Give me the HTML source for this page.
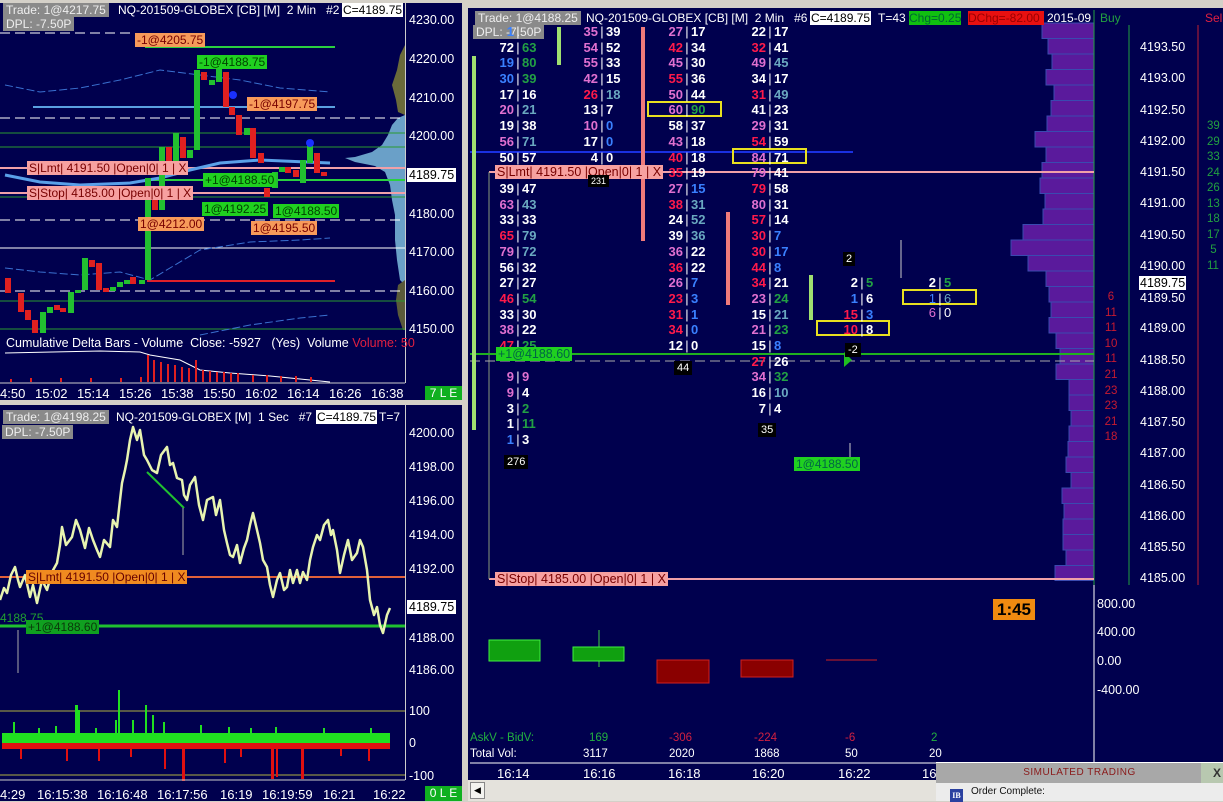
<!DOCTYPE html>
<html><head><meta charset="utf-8"><style>
*{margin:0;padding:0;box-sizing:border-box}
body{width:1223px;height:801px;overflow:hidden;background:#d4d0c8;font-family:"Liberation Sans",sans-serif;position:relative}
.p{position:absolute;background:#00004e;overflow:hidden}
.t{position:absolute;white-space:nowrap;font-size:12px;color:#fff;line-height:14px}
.ax{position:absolute;font-size:12.5px;color:#fff;white-space:nowrap}
.lbl{position:absolute;font-size:12px;line-height:14px;padding:0 2px;white-space:nowrap}
.c{position:absolute;display:flex;font:bold 13px "Liberation Sans",sans-serif;line-height:15px;white-space:nowrap}
.c .a{width:36px;text-align:right}.c .s{width:8px;text-align:center;color:#fff;font-weight:normal}.c .b{width:34px}
.W{color:#fff}.P{color:#e070d0}.R{color:#ff1a4a}.B{color:#3a80ff}.T{color:#6aa8c0}.G{color:#22a044}
.bk{position:absolute;background:#000;color:#fff;font-size:11px;padding:1px 3px}
svg{position:absolute;left:0;top:0}
.tm{position:absolute;font-size:13px;color:#fff;white-space:nowrap}
</style></head><body>

<!-- TOP LEFT PANEL -->
<div class="p" style="left:0;top:3px;width:462px;height:397px">
<svg width="462" height="397" viewBox="0 3 462 397">
<rect x="405" y="3" width="1" height="380" fill="#ccc"/>
<!-- volume profile -->
<polygon points="405,45 400,55 397,70 392,85 396,100 398,112 405,115" fill="#6a6a3a"/>
<polygon points="405,115 398,118 392,125 388,135 382,145 372,152 355,157 345,158 355,162 375,166 385,172 390,185 392,200 395,215 395,240 397,260 400,280 405,285" fill="#6aa0c8"/>
<polygon points="405,280 398,285 396,300 398,315 403,330 405,330" fill="#5a5a3a"/>
<!-- lines -->
<g stroke-width="1">
<line x1="0" y1="33" x2="135" y2="33" stroke="#fff" stroke-dasharray="10,5"/>
<line x1="0" y1="118" x2="405" y2="118" stroke="#fff" stroke-dasharray="10,5"/>
<line x1="0" y1="220" x2="405" y2="220" stroke="#fff" stroke-dasharray="10,5"/>
<line x1="0" y1="291" x2="405" y2="291" stroke="#fff" stroke-dasharray="10,5"/>
<line x1="0" y1="248" x2="405" y2="248" stroke="#fff"/>
<line x1="145" y1="47" x2="335" y2="47" stroke="#2ad040" stroke-width="2"/>
<line x1="0" y1="133" x2="405" y2="133" stroke="#2a9a30"/>
<line x1="0" y1="147" x2="405" y2="147" stroke="#2a9a30"/>
<line x1="0" y1="197" x2="405" y2="197" stroke="#2a9a30"/>
<line x1="0" y1="301" x2="405" y2="301" stroke="#2a9a30"/>
<line x1="0" y1="329" x2="405" y2="329" stroke="#2a9a30"/>
<line x1="33" y1="107" x2="335" y2="107" stroke="#5aa0e0" stroke-width="2"/>
<line x1="147" y1="281" x2="335" y2="281" stroke="#e0202a" stroke-width="2"/>
<line x1="0" y1="168" x2="405" y2="168" stroke="#f0a0a8" stroke-width="2"/>
<line x1="0" y1="193" x2="405" y2="193" stroke="#f0a0a8" stroke-width="2"/>
<line x1="150" y1="180" x2="405" y2="180" stroke="#2ad040" stroke-width="2"/>
<polyline points="5,175 20,178 40,182 80,185 130,183 160,178 190,170 220,163 260,160 330,163" fill="none" stroke="#5aa0e8" stroke-width="3"/>
<polyline points="5,85 40,92 80,88 120,80 160,70 200,75 240,80 280,88 330,92" fill="none" stroke="#3a70d0" stroke-dasharray="8,3"/>
<polyline points="5,268 40,272 80,275 120,272 150,280 200,250 250,242 300,240 330,238" fill="none" stroke="#3a70d0" stroke-dasharray="8,3"/>
<polyline points="200,335 250,325 300,318 330,315" fill="none" stroke="#3a70d0" stroke-dasharray="8,3"/>
</g>
<!-- candles -->
<g>
<rect x="5" y="278" width="6" height="15" fill="#e02020"/><rect x="18" y="293" width="6" height="19" fill="#e02020"/>
<rect x="25" y="310" width="6" height="10" fill="#e02020"/><rect x="32" y="320" width="6" height="13" fill="#e02020"/>
<rect x="40" y="312" width="6" height="21" fill="#22c030"/><rect x="47" y="307" width="6" height="6" fill="#22c030"/>
<rect x="54" y="305" width="6" height="5" fill="#e02020"/><rect x="60" y="308" width="6" height="4" fill="#e02020"/>
<rect x="68" y="292" width="6" height="21" fill="#22c030"/><rect x="75" y="290" width="6" height="3" fill="#22c030"/>
<rect x="82" y="258" width="6" height="32" fill="#22c030"/><rect x="89" y="260" width="6" height="7" fill="#e02020"/>
<rect x="96" y="263" width="6" height="27" fill="#e02020"/><rect x="103" y="288" width="6" height="4" fill="#e02020"/>
<rect x="110" y="287" width="6" height="4" fill="#22c030"/><rect x="117" y="282" width="6" height="5" fill="#22c030"/>
<rect x="124" y="280" width="6" height="4" fill="#22c030"/><rect x="130" y="277" width="6" height="7" fill="#e02020"/>
<rect x="139" y="280" width="6" height="4" fill="#22c030"/><rect x="145" y="178" width="6" height="102" fill="#22c030"/>
<rect x="152" y="193" width="6" height="17" fill="#e02020"/><rect x="159" y="147" width="6" height="63" fill="#22c030"/>
<rect x="166" y="147" width="6" height="26" fill="#e02020"/><rect x="173" y="133" width="6" height="40" fill="#22c030"/>
<rect x="180" y="137" width="6" height="21" fill="#e02020"/><rect x="187" y="150" width="6" height="8" fill="#22c030"/>
<rect x="194" y="70" width="6" height="80" fill="#22c030"/><rect x="201" y="72" width="6" height="8" fill="#e02020"/>
<rect x="209" y="80" width="6" height="5" fill="#22c030"/><rect x="216" y="63" width="6" height="19" fill="#22c030"/>
<rect x="223" y="72" width="6" height="35" fill="#e02020"/><rect x="229" y="107" width="6" height="8" fill="#e02020"/>
<rect x="236" y="115" width="6" height="20" fill="#e02020"/><rect x="244" y="128" width="6" height="7" fill="#22c030"/>
<rect x="250" y="128" width="6" height="30" fill="#e02020"/><rect x="258" y="153" width="6" height="10" fill="#e02020"/>
<rect x="264" y="188" width="6" height="9" fill="#e02020"/><rect x="272" y="172" width="6" height="16" fill="#22c030"/>
<rect x="279" y="167" width="6" height="5" fill="#22c030"/><rect x="285" y="167" width="6" height="6" fill="#e02020"/>
<rect x="293" y="170" width="6" height="7" fill="#e02020"/><rect x="300" y="160" width="6" height="23" fill="#22c030"/>
<rect x="307" y="143" width="6" height="20" fill="#22c030"/><rect x="314" y="153" width="6" height="20" fill="#e02020"/>
<rect x="321" y="172" width="6" height="4" fill="#e02020"/>
<circle cx="233" cy="95" r="4" fill="#1a30ff"/><circle cx="310" cy="143" r="4" fill="#1a30ff"/>
</g>
<!-- cum delta -->
<polyline points="5,353 100,351 140,352 150,355 180,360 200,370 230,373 270,376 310,380 330,382" fill="none" stroke="#fff"/>
<g fill="#e02020">
<rect x="147" y="355" width="2" height="27"/><rect x="153" y="360" width="2" height="22"/><rect x="160" y="362" width="2" height="20"/><rect x="167" y="364" width="2" height="18"/><rect x="174" y="365" width="2" height="17"/><rect x="181" y="367" width="2" height="15"/><rect x="188" y="368" width="2" height="14"/><rect x="195" y="360" width="2" height="22"/><rect x="202" y="370" width="2" height="12"/><rect x="209" y="371" width="2" height="11"/><rect x="216" y="372" width="2" height="10"/><rect x="223" y="372" width="2" height="10"/><rect x="230" y="373" width="2" height="9"/><rect x="237" y="373" width="2" height="9"/><rect x="252" y="375" width="2" height="7"/><rect x="266" y="375" width="2" height="7"/><rect x="280" y="376" width="2" height="6"/><rect x="295" y="376" width="2" height="6"/><rect x="310" y="377" width="2" height="5"/><rect x="10" y="379" width="2" height="3"/><rect x="30" y="378" width="2" height="4"/><rect x="60" y="378" width="2" height="4"/><rect x="90" y="378" width="2" height="4"/><rect x="120" y="378" width="2" height="4"/><rect x="140" y="377" width="2" height="5"/>
</g>
<rect x="0" y="383" width="462" height="17" fill="#00004e"/>
<line x1="0" y1="383" x2="405" y2="383" stroke="#ccc"/>
</svg>
<div class="t" style="left:3px;top:0;background:#8a8a8a;color:#eee;padding:0 3px">Trade: 1@4217.75</div>
<div class="t" style="left:118px;top:0">NQ-201509-GLOBEX [CB] [M] &nbsp;2 Min &nbsp;&nbsp;#2</div>
<div class="t" style="left:342px;top:0;background:#fff;color:#000;padding:0 1px">C=4189.75</div>
<div class="t" style="left:3px;top:14px;background:#8a8a8a;color:#eee;padding:0 3px">DPL: -7.50P</div>
<div class="lbl" style="left:135px;top:30px;background:#f79a5a;color:#700">-1@4205.75</div>
<div class="lbl" style="left:197px;top:52px;background:#20d020;color:#040">-1@4188.75</div>
<div class="lbl" style="left:247px;top:94px;background:#f79a5a;color:#700">-1@4197.75</div>
<div class="lbl" style="left:27px;top:158px;background:#f7a0a0;color:#700">S|Lmt| 4191.50 |Open|0| 1 | X</div>
<div class="lbl" style="left:203px;top:170px;background:#20d020;color:#040">+1@4188.50</div>
<div class="lbl" style="left:27px;top:183px;background:#f7a0a0;color:#700">S|Stop| 4185.00 |Open|0| 1 | X</div>
<div class="lbl" style="left:202px;top:199px;background:#20d020;color:#040">1@4192.25</div>
<div class="lbl" style="left:273px;top:201px;background:#20d020;color:#040">1@4188.50</div>
<div class="lbl" style="left:138px;top:214px;background:#f79a5a;color:#700">1@4212.00</div>
<div class="lbl" style="left:251px;top:218px;background:#f79a5a;color:#700">1@4195.50</div>
<div class="ax" style="left:409px;top:10px">4230.00</div>
<div class="ax" style="left:409px;top:49px">4220.00</div>
<div class="ax" style="left:409px;top:88px">4210.00</div>
<div class="ax" style="left:409px;top:126px">4200.00</div>
<div class="ax" style="left:407px;top:165px;background:#fff;color:#000;padding:0 2px">4189.75</div>
<div class="ax" style="left:409px;top:204px">4180.00</div>
<div class="ax" style="left:409px;top:242px">4170.00</div>
<div class="ax" style="left:409px;top:281px">4160.00</div>
<div class="ax" style="left:409px;top:319px">4150.00</div>
<div class="t" style="left:6px;top:333px;font-size:12.5px">Cumulative Delta Bars - Volume &nbsp;Close: -5927 &nbsp;&nbsp;(Yes) &nbsp;Volume <span style="color:#e02040">Volume: 50</span></div>
<div class="tm" style="left:0;top:383px">4:50</div>
<div class="tm" style="left:35px;top:383px">15:02</div>
<div class="tm" style="left:77px;top:383px">15:14</div>
<div class="tm" style="left:119px;top:383px">15:26</div>
<div class="tm" style="left:161px;top:383px">15:38</div>
<div class="tm" style="left:203px;top:383px">15:50</div>
<div class="tm" style="left:245px;top:383px">16:02</div>
<div class="tm" style="left:287px;top:383px">16:14</div>
<div class="tm" style="left:329px;top:383px">16:26</div>
<div class="tm" style="left:371px;top:383px">16:38</div>
<div class="t" style="left:425px;top:383px;width:37px;height:14px;background:#10b020;text-align:center">7 L E</div>
</div>

<!-- BOTTOM LEFT PANEL -->
<div class="p" style="left:0;top:405px;width:462px;height:396px">
<svg width="462" height="396" viewBox="0 405 462 396">
<rect x="405" y="405" width="1" height="375" fill="#ccc"/>
<line x1="0" y1="577" x2="405" y2="577" stroke="#e0603a" stroke-width="2"/>
<line x1="0" y1="626" x2="405" y2="626" stroke="#20c030" stroke-width="3"/>
<line x1="0" y1="711" x2="405" y2="711" stroke="#b0b040"/>
<line x1="0" y1="775" x2="405" y2="775" stroke="#b0b040"/>
<polyline points="0,600 4,588 7,593 11,575 15,567 18,580 20,587 25,575 30,597 33,585 37,603 42,580 47,590 52,572 57,563 60,545 62,527 66,545 72,537 76,520 80,530 85,548 89,528 93,540 97,550 100,557 104,540 110,547 113,520 117,527 120,500 122,483 125,470 127,460 130,440 133,427 137,440 140,430 144,455 147,460 152,470 157,473 161,455 167,447 170,465 173,463 177,478 182,480 184,495 187,500 190,485 195,477 199,505 203,520 207,500 213,497 216,515 220,500 224,530 227,543 230,555 233,557 237,545 240,563 244,548 247,540 250,525 253,513 257,530 260,543 263,560 267,567 270,585 273,597 277,580 280,573 284,590 287,587 290,570 293,583 297,570 300,583 303,572 307,580 310,560 313,547 317,535 320,540 324,525 328,520 331,535 333,530 337,550 340,573 344,555 348,540 352,560 357,553 360,540 363,547 367,570 370,600 374,615 377,607 380,625 383,633 387,615 390,608" fill="none" stroke="#e8f4b0" stroke-width="2.5" stroke-linejoin="round"/>
<line x1="147" y1="472" x2="184" y2="508" stroke="#20c030" stroke-width="2"/>
<line x1="18" y1="630" x2="18" y2="673" stroke="#aaa"/><line x1="183" y1="508" x2="183" y2="555" stroke="#aaa"/>
<rect x="2" y="733" width="388" height="10" fill="#20e020"/>
<rect x="2" y="743" width="388" height="6" fill="#e01010"/>
<g fill="#20e020">
<rect x="13" y="722" width="2" height="12"/><rect x="38" y="728" width="2" height="6"/><rect x="75" y="705" width="3" height="28"/><rect x="78" y="710" width="2" height="24"/><rect x="118" y="690" width="2" height="44"/><rect x="115" y="720" width="2" height="14"/><rect x="145" y="705" width="2" height="29"/><rect x="152" y="715" width="2" height="19"/><rect x="163" y="722" width="2" height="12"/><rect x="132" y="720" width="2" height="14"/><rect x="200" y="725" width="2" height="9"/><rect x="228" y="727" width="2" height="7"/><rect x="250" y="728" width="2" height="6"/><rect x="275" y="727" width="2" height="7"/><rect x="323" y="728" width="2" height="6"/><rect x="370" y="728" width="2" height="6"/><rect x="55" y="726" width="2" height="8"/><rect x="95" y="728" width="2" height="6"/></g>
<g fill="#e01010">
<rect x="20" y="749" width="2" height="10"/><rect x="66" y="749" width="2" height="12"/><rect x="98" y="749" width="2" height="12"/><rect x="164" y="749" width="2" height="20"/><rect x="182" y="749" width="3" height="32"/><rect x="224" y="749" width="2" height="14"/><rect x="271" y="749" width="3" height="30"/><rect x="276" y="749" width="2" height="28"/><rect x="301" y="749" width="3" height="30"/><rect x="368" y="749" width="2" height="12"/><rect x="130" y="749" width="2" height="8"/><rect x="240" y="749" width="2" height="8"/><rect x="340" y="749" width="2" height="7"/></g>
<line x1="0" y1="780" x2="405" y2="780" stroke="#ccc"/>
</svg>
<div class="t" style="left:3px;top:5px;background:#8a8a8a;color:#eee;padding:0 3px">Trade: 1@4198.25</div>
<div class="t" style="left:116px;top:5px">NQ-201509-GLOBEX [M] &nbsp;1 Sec &nbsp;&nbsp;#7</div>
<div class="t" style="left:316px;top:5px;background:#fff;color:#000;padding:0 1px">C=4189.75</div>
<div class="t" style="left:379px;top:5px">T=7</div>
<div class="t" style="left:2px;top:20px;background:#8a8a8a;color:#eee;padding:0 3px">DPL: -7.50P</div>
<div class="lbl" style="left:26px;top:165px;background:#f08a20;color:#600">S|Lmt| 4191.50 |Open|0| 1 | X</div>
<div class="t" style="left:0;top:206px;color:#20a030">4188.75</div>
<div class="lbl" style="left:26px;top:215px;background:#10a020;color:#0a3a0a">+1@4188.60</div>
<div class="ax" style="left:409px;top:21px">4200.00</div>
<div class="ax" style="left:409px;top:55px">4198.00</div>
<div class="ax" style="left:409px;top:89px">4196.00</div>
<div class="ax" style="left:409px;top:123px">4194.00</div>
<div class="ax" style="left:409px;top:157px">4192.00</div>
<div class="ax" style="left:407px;top:195px;background:#fff;color:#000;padding:0 2px">4189.75</div>
<div class="ax" style="left:409px;top:226px">4188.00</div>
<div class="ax" style="left:409px;top:258px">4186.00</div>
<div class="ax" style="left:409px;top:299px">100</div>
<div class="ax" style="left:409px;top:331px">0</div>
<div class="ax" style="left:409px;top:364px">-100</div>
<div class="tm" style="left:0;top:382px">4:29</div>
<div class="tm" style="left:37px;top:382px">16:15:38</div>
<div class="tm" style="left:97px;top:382px">16:16:48</div>
<div class="tm" style="left:157px;top:382px">16:17:56</div>
<div class="tm" style="left:220px;top:382px">16:19</div>
<div class="tm" style="left:262px;top:382px">16:19:59</div>
<div class="tm" style="left:323px;top:382px">16:21</div>
<div class="tm" style="left:373px;top:382px">16:22</div>
<div class="t" style="left:425px;top:381px;width:37px;height:15px;background:#10b020;text-align:center">0 L E</div>
</div>

<!-- RIGHT PANEL -->
<div class="p" style="left:468px;top:8px;width:755px;height:772px">
<svg width="755" height="772" viewBox="468 8 755 772">
<g fill="#5a1a9c" stroke="#3a4ab0">
<rect x="1042" y="23" width="52" height="15.5"/><rect x="1048" y="38.5" width="46" height="15.5"/><rect x="1052" y="54" width="42" height="15.5"/><rect x="1046" y="69.5" width="48" height="15.5"/><rect x="1054" y="85" width="40" height="15.5"/><rect x="1051" y="100.5" width="43" height="15.5"/><rect x="1047" y="116" width="47" height="15.5"/><rect x="1035" y="131.5" width="59" height="15.5"/><rect x="1046" y="147" width="48" height="15.5"/><rect x="1042" y="162.5" width="52" height="15.5"/><rect x="1040" y="178" width="54" height="15.5"/><rect x="1045" y="193.5" width="49" height="15.5"/><rect x="1043" y="209" width="51" height="15.5"/><rect x="1023" y="224.5" width="71" height="15.5"/><rect x="1011" y="240" width="83" height="15.5"/><rect x="1028" y="255.5" width="66" height="15.5"/><rect x="1046" y="271" width="48" height="15.5"/><rect x="1049" y="286.5" width="45" height="15.5"/><rect x="1051" y="302" width="43" height="15.5"/><rect x="1049" y="317.5" width="45" height="15.5"/><rect x="1056" y="333" width="38" height="15.5"/><rect x="1060" y="348.5" width="34" height="15.5"/><rect x="1056" y="364" width="38" height="15.5"/><rect x="1069" y="379.5" width="25" height="15.5"/><rect x="1069" y="395" width="25" height="15.5"/><rect x="1071" y="410.5" width="23" height="15.5"/><rect x="1069" y="426" width="25" height="15.5"/><rect x="1068" y="441.5" width="26" height="15.5"/><rect x="1066" y="457" width="28" height="15.5"/><rect x="1071" y="472.5" width="23" height="15.5"/><rect x="1062" y="488" width="32" height="15.5"/><rect x="1064" y="503.5" width="30" height="15.5"/><rect x="1063" y="519" width="31" height="15.5"/><rect x="1063" y="534.5" width="31" height="15.5"/><rect x="1066" y="550" width="28" height="15.5"/><rect x="1055" y="565.5" width="39" height="15"/>
</g>
<line x1="1094" y1="10" x2="1094" y2="585" stroke="#22a040"/>
<line x1="1129" y1="25" x2="1129" y2="585" stroke="#22a040"/>
<line x1="1198" y1="25" x2="1198" y2="585" stroke="#c02030"/>
<line x1="489" y1="172" x2="1094" y2="172" stroke="#f0a0a8" stroke-width="2"/>
<line x1="489" y1="579" x2="1094" y2="579" stroke="#f0a0a8" stroke-width="2"/>
<line x1="489" y1="172" x2="489" y2="579" stroke="#8a9a7a"/>
<line x1="470" y1="354" x2="1094" y2="354" stroke="#20b020" stroke-width="2"/>
<line x1="470" y1="361" x2="1094" y2="361" stroke="#aaa" stroke-dasharray="10,5"/>
<line x1="470" y1="152" x2="853" y2="152" stroke="#1a30e0" stroke-width="2"/>
<rect x="472" y="56" width="4" height="374" fill="#a0e070"/>
<rect x="557" y="27" width="4" height="38" fill="#a0e070"/>
<rect x="809" y="275" width="4" height="45" fill="#a0e070"/>
<rect x="641" y="27" width="4" height="214" fill="#f07a7a"/>
<rect x="726" y="212" width="4" height="93" fill="#f07a7a"/>
<rect x="648" y="102" width="73" height="14" fill="none" stroke="#e8e020" stroke-width="2"/>
<rect x="733" y="149" width="73" height="14" fill="none" stroke="#e8e020" stroke-width="2"/>
<rect x="817" y="321" width="72" height="14" fill="none" stroke="#e8e020" stroke-width="2"/>
<rect x="903" y="290" width="73" height="14" fill="none" stroke="#e8e020" stroke-width="2"/>
<line x1="901" y1="240" x2="901" y2="278" stroke="#ccc"/>
<line x1="850" y1="443" x2="850" y2="458" stroke="#ccc"/>
<polygon points="844,352 852,360 844,367" fill="#20c020"/>
<line x1="1094" y1="585" x2="1094" y2="763" stroke="#fff"/>
<line x1="470" y1="763" x2="1094" y2="763" stroke="#fff"/>
<rect x="489" y="640" width="51" height="21" fill="#10a010" stroke="#40f040"/>
<line x1="599" y1="630" x2="599" y2="667" stroke="#40d040"/>
<rect x="573" y="647" width="51" height="14" fill="#10a010" stroke="#40f040"/>
<rect x="657" y="660" width="52" height="23" fill="#8a0000" stroke="#d02020"/>
<rect x="741" y="660" width="52" height="17" fill="#8a0000" stroke="#d02020"/>
<line x1="826" y1="660" x2="877" y2="660" stroke="#d02020"/>
</svg>
<div class="t" style="left:7px;top:3px;background:#8a8a8a;color:#eee;padding:0 3px">Trade: 1@4188.25</div>
<div class="t" style="left:118px;top:3px">NQ-201509-GLOBEX [CB] [M] &nbsp;2 Min &nbsp;&nbsp;#6</div>
<div class="t" style="left:342px;top:3px;background:#fff;color:#000;padding:0 1px">C=4189.75</div>
<div class="t" style="left:410px;top:3px">T=43</div>
<div class="t" style="left:441px;top:3px;background:#10c010;color:#063">Chg=0.25</div>
<div class="t" style="left:500px;top:3px;background:#e81010;color:#900;width:76px">DChg=-82.00</div>
<div class="t" style="left:579px;top:3px">2015-09</div>
<div class="t" style="left:632px;top:3px;color:#22a040">Buy</div>
<div class="t" style="left:737px;top:3px;color:#e02040">Sell</div>
<div class="t" style="left:5px;top:17px;background:#8a8a8a;color:#eee;padding:0 3px">DPL: -7.50P</div>
</div>

<div style="position:absolute;left:0;top:0">
<div class="c" style="left:478px;top:24px"><span class="a B">1</span><span class="s">|</span><span class="b"></span></div>
<div class="c" style="left:478px;top:40px"><span class="a W">72</span><span class="s">|</span><span class="b G">63</span></div>
<div class="c" style="left:478px;top:55px"><span class="a B">19</span><span class="s">|</span><span class="b G">80</span></div>
<div class="c" style="left:478px;top:71px"><span class="a B">30</span><span class="s">|</span><span class="b G">39</span></div>
<div class="c" style="left:478px;top:87px"><span class="a W">17</span><span class="s">|</span><span class="b W">16</span></div>
<div class="c" style="left:478px;top:102px"><span class="a P">20</span><span class="s">|</span><span class="b T">21</span></div>
<div class="c" style="left:478px;top:118px"><span class="a W">19</span><span class="s">|</span><span class="b W">38</span></div>
<div class="c" style="left:478px;top:134px"><span class="a P">56</span><span class="s">|</span><span class="b T">71</span></div>
<div class="c" style="left:478px;top:150px"><span class="a W">50</span><span class="s">|</span><span class="b W">57</span></div>
<div class="c" style="left:478px;top:181px"><span class="a W">39</span><span class="s">|</span><span class="b W">47</span></div>
<div class="c" style="left:478px;top:197px"><span class="a P">63</span><span class="s">|</span><span class="b T">43</span></div>
<div class="c" style="left:478px;top:212px"><span class="a W">33</span><span class="s">|</span><span class="b W">33</span></div>
<div class="c" style="left:478px;top:228px"><span class="a R">65</span><span class="s">|</span><span class="b T">79</span></div>
<div class="c" style="left:478px;top:244px"><span class="a P">79</span><span class="s">|</span><span class="b T">72</span></div>
<div class="c" style="left:478px;top:260px"><span class="a W">56</span><span class="s">|</span><span class="b W">32</span></div>
<div class="c" style="left:478px;top:275px"><span class="a W">27</span><span class="s">|</span><span class="b W">27</span></div>
<div class="c" style="left:478px;top:291px"><span class="a R">46</span><span class="s">|</span><span class="b G">54</span></div>
<div class="c" style="left:478px;top:307px"><span class="a W">33</span><span class="s">|</span><span class="b W">30</span></div>
<div class="c" style="left:478px;top:322px"><span class="a P">38</span><span class="s">|</span><span class="b W">22</span></div>
<div class="c" style="left:478px;top:338px"><span class="a R">47</span><span class="s">|</span><span class="b G">25</span></div>
<div class="c" style="left:478px;top:369px"><span class="a P">9</span><span class="s">|</span><span class="b P">9</span></div>
<div class="c" style="left:478px;top:385px"><span class="a P">9</span><span class="s">|</span><span class="b W">4</span></div>
<div class="c" style="left:478px;top:401px"><span class="a W">3</span><span class="s">|</span><span class="b G">2</span></div>
<div class="c" style="left:478px;top:416px"><span class="a W">1</span><span class="s">|</span><span class="b G">11</span></div>
<div class="c" style="left:478px;top:432px"><span class="a B">1</span><span class="s">|</span><span class="b W">3</span></div>
<div class="c" style="left:562px;top:24px"><span class="a P">35</span><span class="s">|</span><span class="b W">39</span></div>
<div class="c" style="left:562px;top:40px"><span class="a P">54</span><span class="s">|</span><span class="b W">52</span></div>
<div class="c" style="left:562px;top:55px"><span class="a P">55</span><span class="s">|</span><span class="b W">33</span></div>
<div class="c" style="left:562px;top:71px"><span class="a P">42</span><span class="s">|</span><span class="b W">15</span></div>
<div class="c" style="left:562px;top:87px"><span class="a R">26</span><span class="s">|</span><span class="b T">18</span></div>
<div class="c" style="left:562px;top:102px"><span class="a W">13</span><span class="s">|</span><span class="b W">7</span></div>
<div class="c" style="left:562px;top:118px"><span class="a P">10</span><span class="s">|</span><span class="b B">0</span></div>
<div class="c" style="left:562px;top:134px"><span class="a W">17</span><span class="s">|</span><span class="b B">0</span></div>
<div class="c" style="left:562px;top:150px"><span class="a W">4</span><span class="s">|</span><span class="b W">0</span></div>
<div class="c" style="left:647px;top:24px"><span class="a P">27</span><span class="s">|</span><span class="b W">17</span></div>
<div class="c" style="left:647px;top:40px"><span class="a R">42</span><span class="s">|</span><span class="b W">34</span></div>
<div class="c" style="left:647px;top:55px"><span class="a P">45</span><span class="s">|</span><span class="b W">30</span></div>
<div class="c" style="left:647px;top:71px"><span class="a R">55</span><span class="s">|</span><span class="b W">36</span></div>
<div class="c" style="left:647px;top:87px"><span class="a P">50</span><span class="s">|</span><span class="b W">44</span></div>
<div class="c" style="left:647px;top:102px"><span class="a P">60</span><span class="s">|</span><span class="b G">90</span></div>
<div class="c" style="left:647px;top:118px"><span class="a W">58</span><span class="s">|</span><span class="b W">37</span></div>
<div class="c" style="left:647px;top:134px"><span class="a P">43</span><span class="s">|</span><span class="b W">18</span></div>
<div class="c" style="left:647px;top:150px"><span class="a R">40</span><span class="s">|</span><span class="b W">18</span></div>
<div class="c" style="left:647px;top:165px"><span class="a R">35</span><span class="s">|</span><span class="b W">19</span></div>
<div class="c" style="left:647px;top:181px"><span class="a P">27</span><span class="s">|</span><span class="b B">15</span></div>
<div class="c" style="left:647px;top:197px"><span class="a R">38</span><span class="s">|</span><span class="b T">31</span></div>
<div class="c" style="left:647px;top:212px"><span class="a W">24</span><span class="s">|</span><span class="b T">52</span></div>
<div class="c" style="left:647px;top:228px"><span class="a W">39</span><span class="s">|</span><span class="b T">36</span></div>
<div class="c" style="left:647px;top:244px"><span class="a P">36</span><span class="s">|</span><span class="b W">22</span></div>
<div class="c" style="left:647px;top:260px"><span class="a R">36</span><span class="s">|</span><span class="b W">22</span></div>
<div class="c" style="left:647px;top:275px"><span class="a P">26</span><span class="s">|</span><span class="b B">7</span></div>
<div class="c" style="left:647px;top:291px"><span class="a R">23</span><span class="s">|</span><span class="b B">3</span></div>
<div class="c" style="left:647px;top:307px"><span class="a R">31</span><span class="s">|</span><span class="b B">1</span></div>
<div class="c" style="left:647px;top:322px"><span class="a R">34</span><span class="s">|</span><span class="b B">0</span></div>
<div class="c" style="left:647px;top:338px"><span class="a W">12</span><span class="s">|</span><span class="b W">0</span></div>
<div class="c" style="left:730px;top:24px"><span class="a W">22</span><span class="s">|</span><span class="b W">17</span></div>
<div class="c" style="left:730px;top:40px"><span class="a R">32</span><span class="s">|</span><span class="b W">41</span></div>
<div class="c" style="left:730px;top:55px"><span class="a P">49</span><span class="s">|</span><span class="b T">45</span></div>
<div class="c" style="left:730px;top:71px"><span class="a W">34</span><span class="s">|</span><span class="b W">17</span></div>
<div class="c" style="left:730px;top:87px"><span class="a R">31</span><span class="s">|</span><span class="b T">49</span></div>
<div class="c" style="left:730px;top:102px"><span class="a W">41</span><span class="s">|</span><span class="b W">23</span></div>
<div class="c" style="left:730px;top:118px"><span class="a P">29</span><span class="s">|</span><span class="b W">31</span></div>
<div class="c" style="left:730px;top:134px"><span class="a R">54</span><span class="s">|</span><span class="b W">59</span></div>
<div class="c" style="left:730px;top:150px"><span class="a P">84</span><span class="s">|</span><span class="b W">71</span></div>
<div class="c" style="left:730px;top:165px"><span class="a P">79</span><span class="s">|</span><span class="b W">41</span></div>
<div class="c" style="left:730px;top:181px"><span class="a R">79</span><span class="s">|</span><span class="b W">58</span></div>
<div class="c" style="left:730px;top:197px"><span class="a P">80</span><span class="s">|</span><span class="b W">31</span></div>
<div class="c" style="left:730px;top:212px"><span class="a R">57</span><span class="s">|</span><span class="b W">14</span></div>
<div class="c" style="left:730px;top:228px"><span class="a R">30</span><span class="s">|</span><span class="b B">7</span></div>
<div class="c" style="left:730px;top:244px"><span class="a R">30</span><span class="s">|</span><span class="b B">17</span></div>
<div class="c" style="left:730px;top:260px"><span class="a R">44</span><span class="s">|</span><span class="b B">8</span></div>
<div class="c" style="left:730px;top:275px"><span class="a R">34</span><span class="s">|</span><span class="b W">21</span></div>
<div class="c" style="left:730px;top:291px"><span class="a P">23</span><span class="s">|</span><span class="b G">24</span></div>
<div class="c" style="left:730px;top:307px"><span class="a W">15</span><span class="s">|</span><span class="b T">21</span></div>
<div class="c" style="left:730px;top:322px"><span class="a P">21</span><span class="s">|</span><span class="b G">23</span></div>
<div class="c" style="left:730px;top:338px"><span class="a W">15</span><span class="s">|</span><span class="b B">8</span></div>
<div class="c" style="left:730px;top:354px"><span class="a R">27</span><span class="s">|</span><span class="b W">26</span></div>
<div class="c" style="left:730px;top:369px"><span class="a P">34</span><span class="s">|</span><span class="b G">32</span></div>
<div class="c" style="left:730px;top:385px"><span class="a W">16</span><span class="s">|</span><span class="b T">10</span></div>
<div class="c" style="left:730px;top:401px"><span class="a W">7</span><span class="s">|</span><span class="b W">4</span></div>
<div class="c" style="left:822px;top:275px"><span class="a W">2</span><span class="s">|</span><span class="b G">5</span></div>
<div class="c" style="left:822px;top:291px"><span class="a B">1</span><span class="s">|</span><span class="b W">6</span></div>
<div class="c" style="left:822px;top:307px"><span class="a R">15</span><span class="s">|</span><span class="b B">3</span></div>
<div class="c" style="left:822px;top:322px"><span class="a R">10</span><span class="s">|</span><span class="b W">8</span></div>
<div class="c" style="left:900px;top:275px"><span class="a W">2</span><span class="s">|</span><span class="b G">5</span></div>
<div class="c" style="left:900px;top:291px;font-weight:normal"><span class="a B">1</span><span class="s">|</span><span class="b T">6</span></div>
<div class="c" style="left:900px;top:305px;font-weight:normal"><span class="a P">6</span><span class="s">|</span><span class="b W">0</span></div>
</div>

<div class="lbl" style="left:495px;top:165px;background:#f7a0a0;color:#700;font-size:12.5px">S|Lmt| 4191.50 |Open|0| 1 | X</div>
<div class="lbl" style="left:495px;top:572px;background:#f7a0a0;color:#700;font-size:12.5px">S|Stop| 4185.00 |Open|0| 1 | X</div>
<div class="lbl" style="left:496px;top:347px;background:#20d020;color:#064;font-size:12.5px">+1@4188.60</div>
<div class="lbl" style="left:794px;top:457px;background:#20d020;color:#064">1@4188.50</div>
<div class="bk" style="left:504px;top:455px">276</div>
<div class="bk" style="left:674px;top:361px">44</div>
<div class="bk" style="left:758px;top:423px">35</div>
<div class="bk" style="left:843px;top:252px">2</div>
<div class="bk" style="left:845px;top:343px">-2</div>
<div class="bk" style="left:588px;top:175px;font-size:9px">231</div>
<div class="t" style="left:993px;top:599px;width:42px;height:21px;background:#f08a10;color:#000;font:bold 17px 'Liberation Sans',sans-serif;line-height:21px;text-align:center">1:45</div>

<div style="position:absolute;left:1140px;top:32px;font-size:12.5px;color:#fff;line-height:31.25px">4193.50<br>4193.00<br>4192.50<br>4192.00<br>4191.50<br>4191.00<br>4190.50<br>4190.00<br>&nbsp;<br>4189.00<br>4188.50<br>4188.00<br>4187.50<br>4187.00<br>4186.50<br>4186.00<br>4185.50<br>4185.00</div>
<div class="ax" style="left:1139px;top:276px;background:#fff;color:#000;padding:0 1px;line-height:14px">4189.75</div>
<div class="ax" style="left:1140px;top:291px;line-height:14px">4189.50</div>
<div style="position:absolute;left:1100px;top:290px;font-size:11.5px;color:#c81a30;line-height:15.6px;text-align:center;width:22px">6<br>11<br>11<br>10<br>11<br>21<br>23<br>23<br>21<br>18</div>
<div style="position:absolute;left:1207px;top:119px;font-size:11.5px;color:#22a040;line-height:15.5px">39<br>29<br>33<br>24<br>26<br>13<br>18<br>17<br>&nbsp;5<br>11</div>
<div class="ax" style="left:1097px;top:597px">800.00</div>
<div class="ax" style="left:1097px;top:625px">400.00</div>
<div class="ax" style="left:1097px;top:654px">0.00</div>
<div class="ax" style="left:1097px;top:683px">-400.00</div>
<div class="t" style="left:470px;top:731px;color:#22b040;font-size:11.5px">AskV - BidV:</div>
<div class="t" style="left:470px;top:747px;font-size:11.5px">Total Vol:</div>
<div class="t" style="left:589px;top:731px;color:#22b040;font-size:11.5px">169</div>
<div class="t" style="left:669px;top:731px;color:#d02040;font-size:11.5px">-306</div>
<div class="t" style="left:754px;top:731px;color:#d02040;font-size:11.5px">-224</div>
<div class="t" style="left:845px;top:731px;color:#d02040;font-size:11.5px">-6</div>
<div class="t" style="left:931px;top:731px;color:#22b040;font-size:11.5px">2</div>
<div class="t" style="left:583px;top:747px;font-size:11.5px">3117</div>
<div class="t" style="left:669px;top:747px;font-size:11.5px">2020</div>
<div class="t" style="left:754px;top:747px;font-size:11.5px">1868</div>
<div class="t" style="left:845px;top:747px;font-size:11.5px">50</div>
<div class="t" style="left:929px;top:747px;font-size:11.5px">20</div>
<div class="tm" style="left:497px;top:766px">16:14</div>
<div class="tm" style="left:583px;top:766px">16:16</div>
<div class="tm" style="left:668px;top:766px">16:18</div>
<div class="tm" style="left:752px;top:766px">16:20</div>
<div class="tm" style="left:838px;top:766px">16:22</div>
<div class="tm" style="left:922px;top:766px">16:24</div>

<div style="position:absolute;left:468px;top:780px;width:755px;height:21px;background:#e4e2dc"></div>
<div style="position:absolute;left:470px;top:782px;width:15px;height:17px;background:#f4f4f0;border:1px solid #888;font-size:9px;text-align:center;line-height:15px">◀</div>
<div style="position:absolute;left:936px;top:762px;width:287px;height:39px;background:#ececec;border-top:1px solid #fff">
<div style="height:20px;background:#a8a8a8;color:#8a1a1a;font-size:10px;line-height:20px;text-align:center;letter-spacing:.5px">SIMULATED TRADING</div>
<div style="position:absolute;right:0;top:0;width:22px;height:20px;background:#b8c8b0;color:#333;font:bold 12px sans-serif;text-align:right;line-height:20px;padding-right:2px">X</div>
<div style="position:absolute;left:14px;top:26px;width:13px;height:13px;background:#2a40a0;color:#fff;font:bold 8px 'Liberation Serif',serif;text-align:center;line-height:13px">IB</div>
<div style="position:absolute;left:35px;top:23px;font-size:10px;color:#111">Order Complete:</div>
</div>
</body></html>
